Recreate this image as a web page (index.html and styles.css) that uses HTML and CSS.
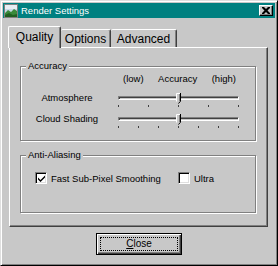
FILE: index.html
```html
<!DOCTYPE html>
<html>
<head>
<meta charset="utf-8">
<link rel="stylesheet" href="styles.css">
</head>
<body>
<div class="window">
  <div class="titlebar">
    <svg class="app-icon" width="14" height="14" viewBox="0 0 14 14">
      <rect x="0" y="0" width="14" height="14" fill="#808080"/>
      <rect x="1" y="1" width="12" height="12" fill="#c8d8e8"/>
      <rect x="1" y="1" width="12" height="4" fill="#e8eef4"/>
      <path d="M1 9 L4 6 L7 8 L10 5 L13 7 L13 13 L1 13 Z" fill="#3a8a3a"/>
      <path d="M1 11 L5 9 L9 11 L13 10 L13 13 L1 13 Z" fill="#206020"/>
    </svg>
    <span class="title">Render Settings</span>
    <div class="title-close">
      <svg width="8" height="7" viewBox="0 0 8 7"><path d="M0 0h2l2 2 2-2h2v1L5.5 3.5 8 6v1H6L4 5 2 7H0V6l2.5-2.5L0 1z" fill="#000"/></svg>
    </div>
  </div>
  <div class="body">
    <div class="tabs">
      <div class="tab active">Quality</div>
      <div class="tab">Options</div>
      <div class="tab">Advanced</div>
    </div>
    <div class="panel">
      <div class="group accuracy">
        <div class="group-label">Accuracy</div>
        <div class="scale-head"><span>(low)</span><span>Accuracy</span><span>(high)</span></div>
        <div class="slider-row first">
          <span class="slider-label">Atmosphere</span>
          <div class="slider">
            <div class="track"></div>
            <div class="ticks"><i></i><i></i><i></i><i></i><i></i></div>
            <svg class="thumb" width="5" height="11" viewBox="0 0 5 11">
              <path d="M0 0H5V8L2.5 10.5L0 8Z" fill="#c8c8c8"/>
              <path d="M0.5 8.5V0.5H4" stroke="#fff" fill="none"/>
              <path d="M4.5 0V8.2L2.5 10.5" stroke="#000" fill="none"/>
              <path d="M3.5 1V8" stroke="#808080" fill="none"/>
            </svg>
          </div>
        </div>
        <div class="slider-row">
          <span class="slider-label">Cloud Shading</span>
          <div class="slider">
            <div class="track"></div>
            <div class="ticks"><i></i><i></i><i></i><i></i><i></i><i></i><i></i></div>
            <svg class="thumb" width="5" height="11" viewBox="0 0 5 11">
              <path d="M0 0H5V8L2.5 10.5L0 8Z" fill="#c8c8c8"/>
              <path d="M0.5 8.5V0.5H4" stroke="#fff" fill="none"/>
              <path d="M4.5 0V8.2L2.5 10.5" stroke="#000" fill="none"/>
              <path d="M3.5 1V8" stroke="#808080" fill="none"/>
            </svg>
          </div>
        </div>
      </div>
      <div class="group anti">
        <div class="group-label">Anti-Aliasing</div>
        <div class="check-row">
          <label class="check first">
            <span class="box"><svg width="7" height="7" viewBox="0 0 7 7"><path d="M0 2.5L2.5 5L7 0.5V2.5L2.5 7L0 4.5Z" fill="#000"/></svg></span>
            <span>Fast Sub-Pixel Smoothing</span>
          </label>
          <label class="check">
            <span class="box"></span>
            <span>Ultra</span>
          </label>
        </div>
      </div>
    </div>
    <div class="actions">
      <button class="btn default"><span class="focus"><u>C</u>lose</span></button>
    </div>
  </div>
</div>
</body>
</html>
```

FILE: styles.css
```css
html, body {
  margin: 0;
  padding: 0;
  background: #c8c8c8;
}

body {
  font-family: "Liberation Sans", Arial, sans-serif;
  font-size: 9.5px;
  color: #000;
}

.window {
  width: 278px;
  height: 266px;
  box-sizing: border-box;
  border: 1px solid;
  border-color: #dfdfdf #000 #000 #dfdfdf;
  box-shadow: inset 1px 1px #fff, inset -1px -1px #808080;
  padding: 2px;
  background: #c8c8c8;
}

.titlebar {
  height: 15px;
  background: #008080;
  display: flex;
  align-items: center;
  padding: 0 2px 0 1px;
  color: #fff;
}

.app-icon {
  display: block;
  flex: none;
}

.title {
  margin-left: 3px;
  flex: 1;
  line-height: 15px;
  white-space: nowrap;
}

.title-close {
  width: 14px;
  height: 11px;
  box-sizing: border-box;
  background: #c8c8c8;
  border: 1px solid;
  border-color: #fff #000 #000 #fff;
  box-shadow: inset -1px -1px #808080;
  display: flex;
  align-items: center;
  justify-content: center;
  padding-bottom: 1px;
}

.title-close svg {
  display: block;
}

.body {
  padding: 8px 7px 0 6px;
}

.tabs {
  display: flex;
  align-items: flex-end;
  height: 21px;
  font-size: 12px;
}

.tab {
  box-sizing: border-box;
  height: 18px;
  border-top: 1px solid #fff;
  border-left: 1px solid #fff;
  border-right: 1px solid #404040;
  border-radius: 2px 2px 0 0;
  box-shadow: inset -1px 0 #808080;
  background: #c8c8c8;
  text-align: center;
  line-height: 14px;
  padding-top: 2px;
  white-space: nowrap;
}

.tab:nth-child(2) { width: 50px; border-left: none; }
.tab:nth-child(3) { width: 66px; border-left: none; }

.tab.active {
  width: 53px;
  height: 22px;
  margin-left: -1px;
  margin-bottom: -1px;
  padding-top: 3px;
  position: relative;
  z-index: 1;
}

.panel {
  height: 180px;
  box-sizing: border-box;
  border-top: 1px solid #fff;
  border-left: 1px solid #fff;
  border-right: 1px solid #404040;
  border-bottom: 1px solid #404040;
  box-shadow: inset -1px -1px #808080;
  padding: 18px 11px 0 10px;
}

.group {
  border: 1px solid #808080;
  box-shadow: inset 1px 1px #fff, 1px 1px #fff;
}

.group-label {
  width: fit-content;
  margin: -7px 0 0 5px;
  padding: 0 2px;
  height: 12px;
  line-height: 12px;
  background: #c8c8c8;
  white-space: nowrap;
}

.accuracy {
  padding-bottom: 11px;
}

.scale-head {
  margin: 1px 0 0 97px;
  width: 121px;
  box-sizing: border-box;
  padding: 0 3px 0 5px;
  display: flex;
  justify-content: space-between;
  line-height: 12px;
}

.slider-row {
  display: grid;
  grid-template-columns: 92px 121px;
  column-gap: 5px;
  height: 20px;
  margin-top: 1px;
}

.slider-row.first {
  margin-top: 3px;
}

.slider-label {
  text-align: center;
  line-height: 20px;
  white-space: nowrap;
}

.slider {
  position: relative;
  height: 20px;
}

.track {
  margin-top: 8px;
  height: 4px;
  box-sizing: border-box;
  border: 1px solid;
  border-color: #808080 #fff #fff #808080;
  box-shadow: inset 1px 1px #404040;
  background: #c8c8c8;
}

.ticks {
  display: flex;
  justify-content: space-between;
  margin-top: 5px;
}

.ticks i {
  display: block;
  width: 1px;
  height: 2px;
  background: #404040;
}

.thumb {
  position: absolute;
  left: 58px;
  top: 5px;
  display: block;
}

.anti {
  margin-top: 14px;
  padding-bottom: 27px;
}

.check-row {
  display: flex;
  margin-top: 10px;
  padding-left: 14px;
  height: 14px;
  align-items: center;
}

.check {
  display: flex;
  align-items: center;
  gap: 4px;
  white-space: nowrap;
}

.check.first {
  width: 143px;
}

.box {
  width: 12px;
  height: 12px;
  box-sizing: border-box;
  background: #fff;
  border: 1px solid;
  border-color: #808080 #fff #fff #808080;
  box-shadow: inset 1px 1px #000, inset -1px -1px #dfdfdf;
  display: flex;
  align-items: center;
  justify-content: center;
}

.box svg {
  display: block;
}

.actions {
  display: flex;
  justify-content: center;
  margin-top: 6px;
  padding-left: 1px;
}

.btn {
  width: 86px;
  height: 22px;
  box-sizing: border-box;
  margin: 0;
  padding: 3px;
  font-family: "Liberation Sans", Arial, sans-serif;
  font-size: 10px;
  color: #000;
  background: #c8c8c8;
  border: 1px solid #000;
  box-shadow: inset 1px 1px #fff, inset -1px -1px #404040, inset -2px -2px #808080;
  display: flex;
}

.focus {
  flex: 1;
  border: 1px dotted #000;
  display: flex;
  align-items: center;
  justify-content: center;
  line-height: 12px;
}
```
